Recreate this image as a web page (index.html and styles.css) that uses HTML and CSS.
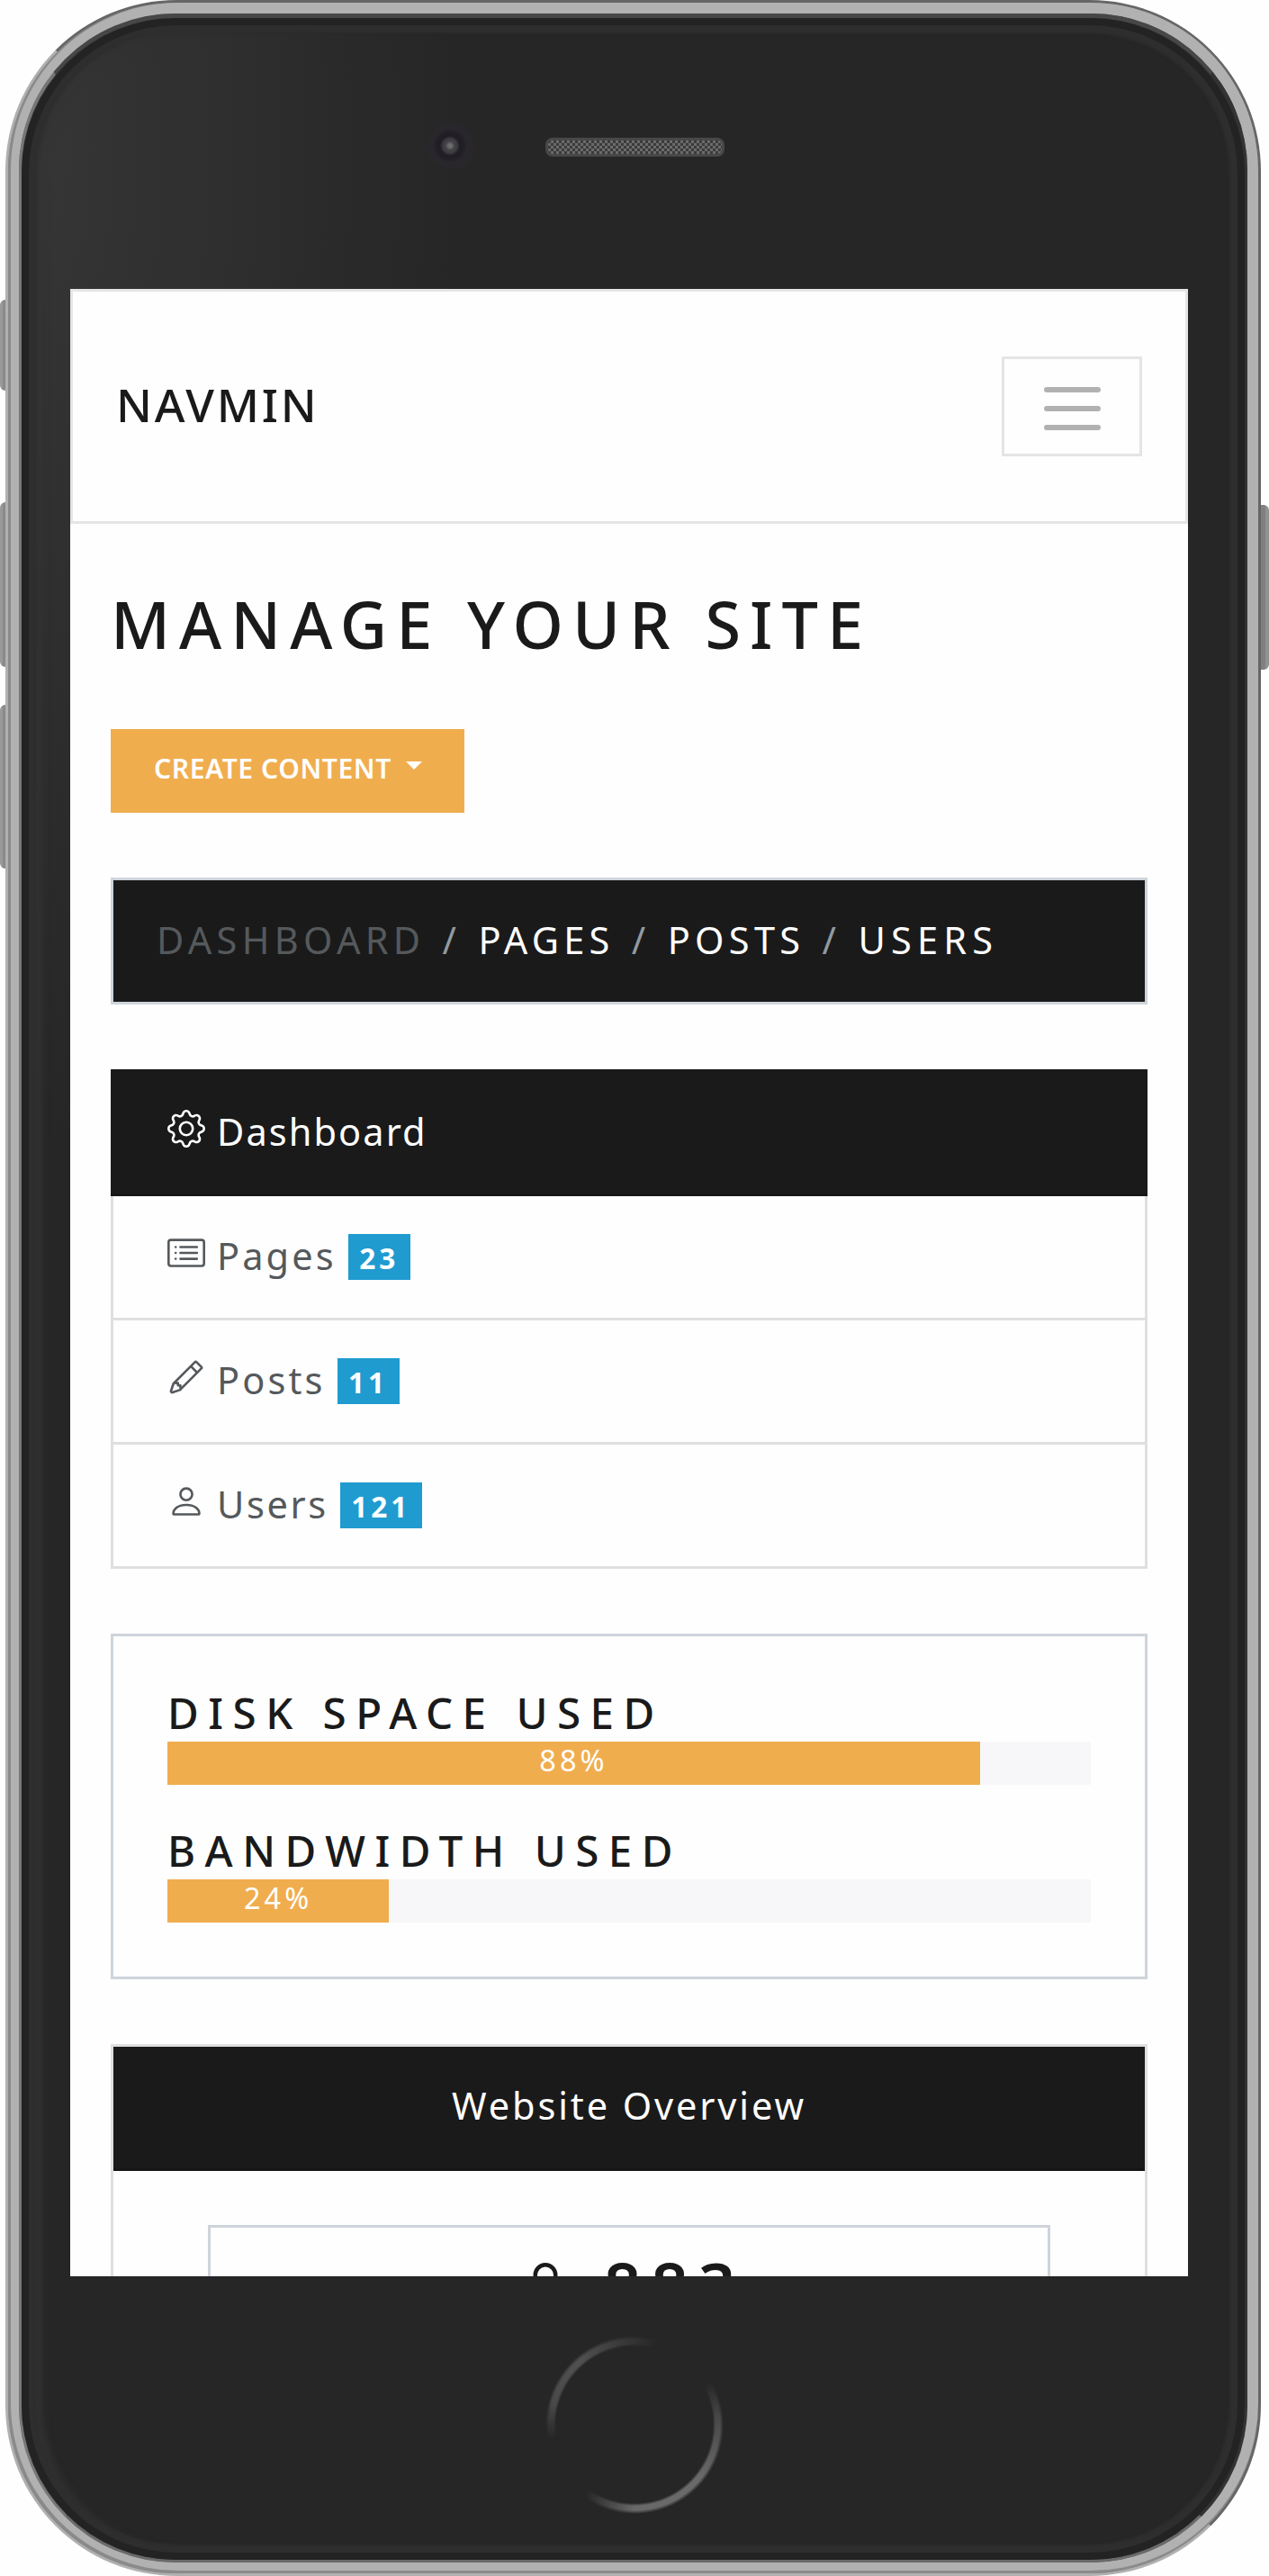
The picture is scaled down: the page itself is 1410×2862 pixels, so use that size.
FILE: index.html
```html
<!DOCTYPE html>
<html lang="en">
<head>
<meta charset="utf-8">
<title>NAVMIN</title>
<link rel="stylesheet" href="styles.css">
</head>
<body>
<div class="stage">
  <span class="key key-mute"></span>
  <span class="key key-up"></span>
  <span class="key key-down"></span>
  <span class="key key-power"></span>
  <div class="edge"><div class="groove"><div class="metal"><div class="lip"><div class="face">
    <span class="camera"></span>
    <span class="speaker"></span>
    <span class="home"></span>
    <div class="screen">
      <nav class="navbar">
        <a class="brand">NAVMIN</a>
        <button class="toggler" aria-label="Menu"><i></i><i></i><i></i></button>
      </nav>
      <main class="content">
        <h1 class="title">MANAGE YOUR SITE</h1>
        <button class="create"><span>CREATE CONTENT</span><i class="caret"></i></button>
        <ol class="crumbs">
          <li class="current">DASHBOARD</li><li class="sep">/</li>
          <li>PAGES</li><li class="sep">/</li>
          <li>POSTS</li><li class="sep">/</li>
          <li class="wide">USERS</li>
        </ol>
        <div class="list">
          <a class="item active">
            <svg class="icon" viewBox="0 0 16 16" fill="currentColor" fill-rule="evenodd"><path d="M8.837 1.626c-.246-.835-1.428-.835-1.674 0l-.094.319A1.873 1.873 0 0 1 4.377 3.06l-.292-.16c-.764-.415-1.6.42-1.184 1.185l.159.292a1.873 1.873 0 0 1-1.115 2.692l-.319.094c-.835.246-.835 1.428 0 1.674l.319.094a1.873 1.873 0 0 1 1.115 2.693l-.16.291c-.415.764.42 1.6 1.185 1.184l.292-.159a1.873 1.873 0 0 1 2.692 1.116l.094.318c.246.835 1.428.835 1.674 0l.094-.319a1.873 1.873 0 0 1 2.693-1.115l.291.16c.764.415 1.6-.42 1.184-1.185l-.159-.291a1.873 1.873 0 0 1 1.116-2.693l.318-.094c.835-.246.835-1.428 0-1.674l-.319-.094a1.873 1.873 0 0 1-1.115-2.692l.16-.292c.415-.764-.42-1.6-1.185-1.184l-.291.159A1.873 1.873 0 0 1 8.93 1.945l-.094-.319zm-2.633-.283c.527-1.79 3.065-1.79 3.592 0l.094.319a.873.873 0 0 0 1.255.52l.292-.16c1.64-.892 3.434.901 2.54 2.541l-.159.292a.873.873 0 0 0 .52 1.255l.319.094c1.79.527 1.79 3.065 0 3.592l-.319.094a.873.873 0 0 0-.52 1.255l.16.292c.893 1.64-.902 3.434-2.541 2.54l-.292-.159a.873.873 0 0 0-1.255.52l-.094.319c-.527 1.79-3.065 1.79-3.592 0l-.094-.319a.873.873 0 0 0-1.255-.52l-.292.16c-1.64.893-3.433-.902-2.54-2.541l.159-.292a.873.873 0 0 0-.52-1.255l-.319-.094c-1.79-.527-1.79-3.065 0-3.592l.319-.094a.873.873 0 0 0 .52-1.255l-.16-.292c-.892-1.64.902-3.433 2.541-2.54l.292.159a.873.873 0 0 0 1.255-.52l.094-.319z"/><path d="M8 5.754a2.246 2.246 0 1 0 0 4.492 2.246 2.246 0 0 0 0-4.492zM4.754 8a3.246 3.246 0 1 1 6.492 0 3.246 3.246 0 0 1-6.492 0z"/></svg>
            <span class="label">Dashboard</span>
          </a>
          <a class="item">
            <svg class="icon" viewBox="0 0 16 16" fill="none" stroke="currentColor" stroke-linecap="round"><rect x=".5" y="2.5" width="15" height="11" rx="1"/><path d="M5.5 5.5h7M5.5 8h7M5.5 10.5h7M3.5 5.5h0M3.5 8h0M3.5 10.5h0"/></svg>
            <span class="label roomy">Pages</span><b class="badge">23</b>
          </a>
          <a class="item">
            <svg class="icon" viewBox="0 0 16 16" fill="currentColor" fill-rule="evenodd"><path d="M11.293 1.293a1 1 0 0 1 1.414 0l2 2a1 1 0 0 1 0 1.414l-9 9a1 1 0 0 1-.39.242l-3 1a1 1 0 0 1-1.266-1.265l1-3a1 1 0 0 1 .242-.391l9-9zM12 2l2 2-9 9-3 1 1-3 9-9z"/><path d="M12.146 6.354l-2.5-2.5.708-.708 2.5 2.5-.707.708zM3 10v.5a.5.5 0 0 0 .5.5H4v.5a.5.5 0 0 0 .5.5H5v.5a.5.5 0 0 0 .5.5H6v-1.5a.5.5 0 0 0-.5-.5H5v-.5a.5.5 0 0 0-.5-.5H3z"/></svg>
            <span class="label roomy">Posts</span><b class="badge">11</b>
          </a>
          <a class="item">
            <svg class="icon" viewBox="0 0 16 16" fill="none" stroke="currentColor"><circle cx="8" cy="5" r="2.5"/><path d="M3 13.5h10c.35 0 .5-.2.5-.5 0-1-1.2-3.5-5.5-3.5S2.5 12 2.5 13c0 .3.15.5.5.5z"/></svg>
            <span class="label snug">Users</span><b class="badge">121</b>
          </a>
        </div>
        <section class="card">
          <h4 class="meter-title">DISK SPACE USED</h4>
          <div class="meter"><div class="fill" style="width:88%">88%</div></div>
          <h4 class="meter-title">BANDWIDTH USED</h4>
          <div class="meter"><div class="fill" style="width:24%">24%</div></div>
        </section>
        <section class="overview">
          <header class="overview-head">Website Overview</header>
          <div class="stat">
            <svg class="stat-icon" viewBox="0 0 16 16" fill="none" stroke="currentColor"><circle cx="8" cy="5" r="2.5"/><path d="M3 13.5h10c.35 0 .5-.2.5-.5 0-1-1.2-3.5-5.5-3.5S2.5 12 2.5 13c0 .3.15.5.5.5z"/></svg>
            <span class="count">883</span>
          </div>
        </section>
      </main>
    </div>
  </div></div></div></div></div>
</div>
</body>
</html>
```
FILE: styles.css
```css
* { box-sizing: border-box; }
body { margin: 0; background: #fefefe; font-family: "Noto Sans", "Open Sans", sans-serif; color: #1a1a1a; }
h1, h4, ol { margin: 0; padding: 0; font-weight: 500; list-style: none; }
button { font: inherit; padding: 0; }

/* Device shell */
.stage { position: relative; width: 1410px; height: 2862px; padding: 0 9px 0 6px; overflow: hidden; }
.key { position: absolute; width: 9px; background: linear-gradient(90deg, #999 0 3px, #8a8a8a 3px 6px, #707070 6px); }
.key-mute { left: 0; top: 333px; height: 101px; border-radius: 6px 0 0 6px; }
.key-up { left: 0; top: 558px; height: 183px; border-radius: 6px 0 0 6px; }
.key-down { left: 0; top: 783px; height: 182px; border-radius: 6px 0 0 6px; }
.key-power { right: 0; top: 561px; height: 183px; border-radius: 0 6px 6px 0; background: linear-gradient(90deg, #808080 0 5px, #929292 5px); }
.edge, .groove, .metal, .lip, .face { height: 100%; }
.edge { position: relative; border: 3px solid; border-color: #666 #666 #b0b0b0 #b0b0b0; border-radius: 190px; background: #8a8a8a; }
.groove { border: solid #8a8a8a; border-width: 0 0 3px 3px; border-radius: 187px; }
.metal { border: solid #b1b1b1; border-width: 12px 12px 9px 9px; border-radius: 186px; background: #555; }
.lip { border: solid; border-width: 5px 3px 3px 3px; border-color: #474747 #333 #6a6a6a #777; border-radius: 174px; background: #333; }
.face {
  position: relative; padding: 301px 63px 0 54px; border-radius: 172px;
  box-shadow: inset 0 0 0 8px #232323, inset 0 0 3px 17px #2e2e2e, inset 14px 0 10px 8px #343434;
  background: radial-gradient(ellipse 480px 1100px at 0 150px, #363636, #262626) #262626;
}
.camera {
  position: absolute; left: 446px; top: 112px; width: 60px; height: 60px; border-radius: 50%;
  background: radial-gradient(circle at 50% 50%, #6c6c6e 0 2px, #434246 5px, #3c3b40 8px, #201e24 11px, #222026 15px, #29272c 19px, transparent 30px);
}
.speaker {
  position: absolute; left: 582px; top: 133px; width: 199px; height: 21px; border-radius: 8px;
  background: conic-gradient(#6b6b6b 25%, #3b3b3b 0 50%, #6b6b6b 0 75%, #3b3b3b 0) 0 0 / 6px 6px;
  border: 3px solid #484848;
}
.home {
  position: absolute; left: 582px; top: 2575px; width: 198px; height: 198px; border-radius: 50%;
  background: conic-gradient(#333 0deg, #262626 15deg 60deg, #484848 85deg, #6a6a6a 130deg, #686868 180deg, #262626 215deg 260deg, #4a4a4a 285deg, #505050 320deg, #333 360deg);
  -webkit-mask: radial-gradient(circle, transparent 87px, #000 90px 95px, transparent 99px);
  mask: radial-gradient(circle, transparent 87px, #000 90px 95px, transparent 99px);
}

/* Page on the screen */
.screen { position: relative; width: 1242px; height: 2208px; background: #fefefe; overflow: hidden; }
.navbar { height: 261px; border: 3px solid #e5e5e5; padding: 0 48px; display: flex; align-items: center; justify-content: space-between; }
.brand { font-size: 51.5px; letter-spacing: 2.8px; font-weight: 500; line-height: 70px; margin-bottom: 6px; }
.toggler { width: 156px; height: 111px; border: 3px solid #e5e5e5; background: none; display: flex; flex-direction: column; align-items: center; justify-content: center; gap: 15px; padding-top: 4px; }
.toggler i { width: 63px; height: 6px; border-radius: 3px; background: #b1b1b1; }
.content { padding: 71px 45px 0; }
.title { font-size: 72px; line-height: 80px; letter-spacing: 10px; font-weight: 500; }
.create { display: flex; align-items: flex-start; margin-top: 77px; width: 393px; height: 93px; padding: 22px 0 0 48px; border: 0; background: #f0ad4e; color: #fff; font-size: 30px; line-height: 44px; font-weight: 600; letter-spacing: .6px; white-space: nowrap; }
.caret { margin: 14px 0 0 16px; border: solid transparent; border-width: 9px 9px 0; border-top-color: #fff; }
.crumbs { display: flex; margin-top: 72px; height: 141px; padding: 36px 48px; border: 3px solid #ced4da; background: #1a1a1a; color: #fff; font-size: 41.5px; font-weight: 400; line-height: 60px; letter-spacing: 5.3px; }
.crumbs .current { color: #55595c; }
.crumbs .sep { color: #919aa1; width: 59px; padding-left: 19px; }
.crumbs .wide { letter-spacing: 6.2px; }
.list { margin-top: 72px; border: solid #dfdfdf; border-width: 0 3px; }
.item { display: flex; height: 138px; padding: 42px 0 0 60px; border-bottom: 3px solid #dfdfdf; color: #55595c; font-size: 41.5px; line-height: 49px; }
.item.active { height: 141px; margin: 0 -3px; padding: 45px 0 0 63px; background: #1a1a1a; border-color: #161616; color: #fff; }
.icon { width: 42px; height: 42px; flex: none; }
.label { margin-left: 13px; letter-spacing: 2.1px; }
.roomy { letter-spacing: 3.1px; }
.snug { letter-spacing: 2.6px; }
.badge { align-self: flex-start; height: 51px; margin-left: 13.5px; padding: 0 13px 0 12px; background: #209bd0; color: #fff; font-size: 31.5px; line-height: 54px; letter-spacing: 4px; font-weight: 700; }
.card { margin-top: 72px; height: 384px; padding: 60px; border: 3px solid #ced4da; }
.meter-title { height: 57px; font-size: 47.5px; line-height: 49px; letter-spacing: 10.5px; }
.meter { height: 48px; margin-bottom: 48px; background: #f7f7f9; }
.fill { height: 48px; background: #f0ad4e; color: #fff; font-size: 32.5px; line-height: 42px; letter-spacing: 4px; text-align: center; }
.overview { margin-top: 72px; border: 3px solid #dfdfdf; height: 500px; }
.overview-head { height: 138px; border-bottom: 3px solid #161616; background: #1a1a1a; color: #fff; text-align: center; font-size: 41.5px; line-height: 131px; letter-spacing: 2.9px; }
.stat { display: flex; margin: 60px 105px 0; height: 300px; border: 3px solid #ced4da; padding: 30px 0 0 336px; }
.stat-icon { width: 72px; height: 72px; }
.count { margin-left: 29px; font-size: 72px; line-height: 86px; font-weight: 600; letter-spacing: 11.3px; margin-top: -9px; }
```
